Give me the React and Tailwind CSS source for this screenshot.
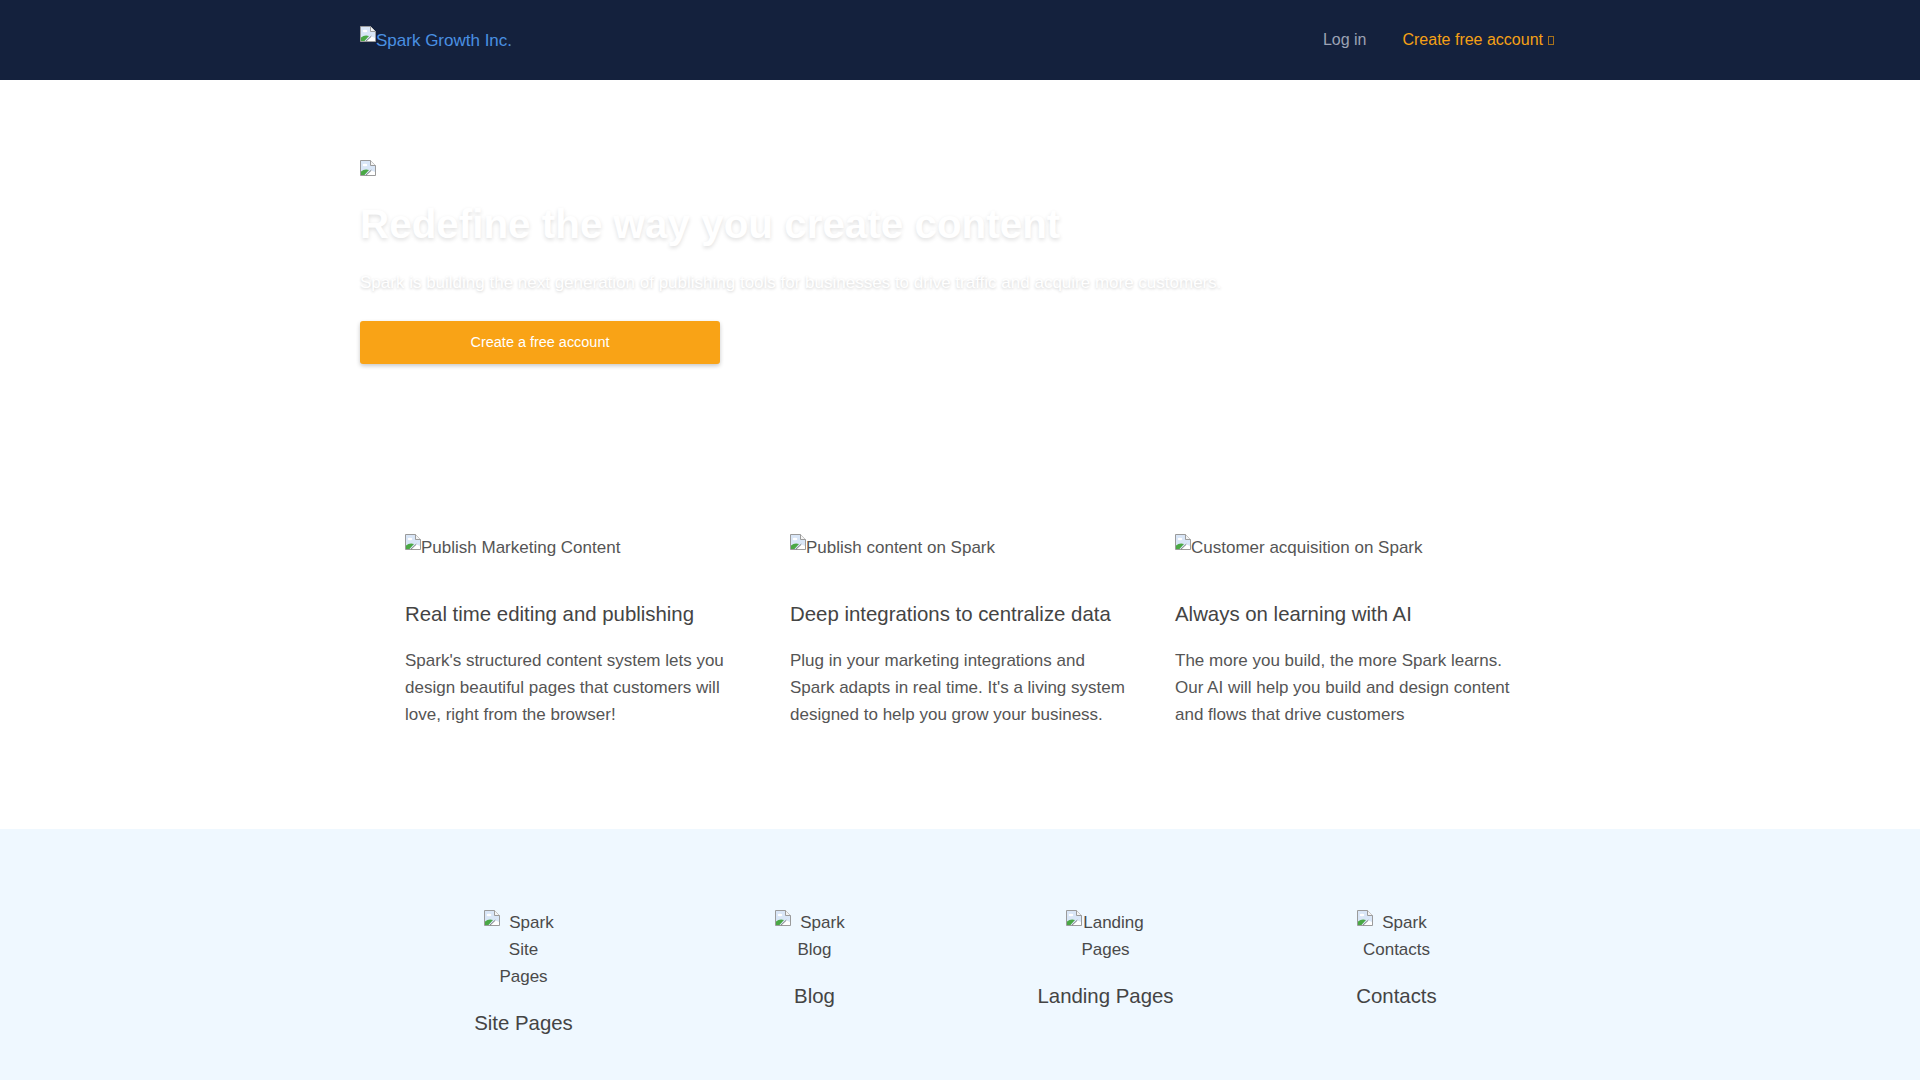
import React from "react";

function BrokenImg({ className = "" }) {
  return (
    <svg className={className} width="16" height="16" viewBox="0 0 16 16" aria-hidden="true">
      <path d="M0.5 0.5 H10.5 L15.5 5.5 V15.5 H0.5 Z" fill="#d9e6f7" stroke="#9b9b9b" />
      <path d="M10.5 0.5 V5.5 H15.5" fill="#f4f4f4" stroke="#9b9b9b" />
      <ellipse cx="5" cy="5" rx="2.4" ry="1.2" fill="#ffffff" />
      <path d="M1 15 V11.5 Q4.5 8.5 9 10 L4.5 15 Z" fill="#4aa845" />
      <path d="M6.5 15 L11.5 10.5 L15 12 V15 Z" fill="#ffffff" />
      <path d="M6 15.2 L11.3 10.2" stroke="#6b6b6b" strokeWidth="0.9" />
    </svg>
  );
}

const features = [
  {
    alt: "Publish Marketing Content",
    title: "Real time editing and publishing",
    text: "Spark's structured content system lets you design beautiful pages that customers will love, right from the browser!",
  },
  {
    alt: "Publish content on Spark",
    title: "Deep integrations to centralize data",
    text: "Plug in your marketing integrations and Spark adapts in real time. It's a living system designed to help you grow your business.",
  },
  {
    alt: "Customer acquisition on Spark",
    title: "Always on learning with AI",
    text: "The more you build, the more Spark learns. Our AI will help you build and design content and flows that drive customers",
  },
];

const products = [
  { alt: "Spark Site Pages", title: "Site Pages" },
  { alt: "Spark Blog", title: "Blog" },
  { alt: "Landing Pages", title: "Landing Pages" },
  { alt: "Spark Contacts", title: "Contacts" },
];

export default function App() {
  return (
    <div className="min-h-screen bg-white font-['Liberation_Sans',Arial,sans-serif]">
      {/* Nav */}
      <header className="h-[80px] bg-[#14213d]">
        <div className="mx-auto flex h-full w-[1200px] items-center justify-between">
          <a className="flex items-start pt-[2px] text-[17px] leading-[20px] text-[#4a90e2]" href="#">
            <BrokenImg className="mt-[-5px] shrink-0" />
            <span>Spark Growth Inc.</span>
          </a>
          <nav className="mr-[6px] flex items-center text-[16px] leading-[24px]">
            <a className="text-[#9ca3b4]" href="#">Log in</a>
            <a className="ml-[36px] flex items-center text-[#f5a015]" href="#">
              Create free account
              <span className="ml-[5px] inline-block h-[9px] w-[6px] border border-[#a8711a]" />
            </a>
          </nav>
        </div>
      </header>

      {/* Hero */}
      <section className="mx-auto w-[1200px] pt-[80px]">
        <BrokenImg className="block" />
        <h1 className="mt-6 text-[40.4px] font-bold leading-[48px] text-white [text-shadow:0_2px_4px_rgba(0,0,0,0.13)]">
          Redefine the way you create content
        </h1>
        <p className="mt-[23px] text-[17px] leading-[24px] text-white [text-shadow:0_1px_3px_rgba(0,0,0,0.2)]">
          Spark is building the next generation of publishing tools for businesses to drive traffic and acquire more customers.
        </p>
        <button className="mt-[26px] h-[43px] w-[360px] rounded-[3px] bg-[#f9a316] text-[14.45px] text-white shadow-[0_2px_4px_rgba(0,0,0,0.22)]">
          Create a free account
        </button>
      </section>

      {/* Features */}
      <section className="mx-auto mt-[172px] w-[1200px] pb-[101px] pl-[45px]">
        <div className="grid grid-cols-[340px_340px_340px] gap-x-[45px]">
          {features.map((f) => (
            <div key={f.title}>
              <div className="flex items-start text-[17px] leading-[24px] text-[#555]">
                <BrokenImg className="mt-[-2px] shrink-0" />
                <span>{f.alt}</span>
              </div>
              <h3 className="mt-[42px] text-[20.4px] leading-[24px] text-[#444]">{f.title}</h3>
              <p className="mt-[21px] text-[17px] leading-[27px] text-[#555]">{f.text}</p>
            </div>
          ))}
        </div>
      </section>

      {/* Products */}
      <section className="bg-[#eff8ff] pb-[80px] pt-[80px]">
        <div className="mx-auto grid w-[1164px] grid-cols-4">
          {products.map((p) => (
            <div key={p.title} className="flex flex-col items-center">
              <div className="w-[80px] text-center text-[17px] leading-[27px] text-[#4a4a4a]">
                <BrokenImg className="float-left mt-[1px]" />
                {p.alt}
              </div>
              <h3 className="mt-[21px] text-[20.4px] leading-[24px] text-[#444]">{p.title}</h3>
            </div>
          ))}
        </div>
      </section>
    </div>
  );
}
